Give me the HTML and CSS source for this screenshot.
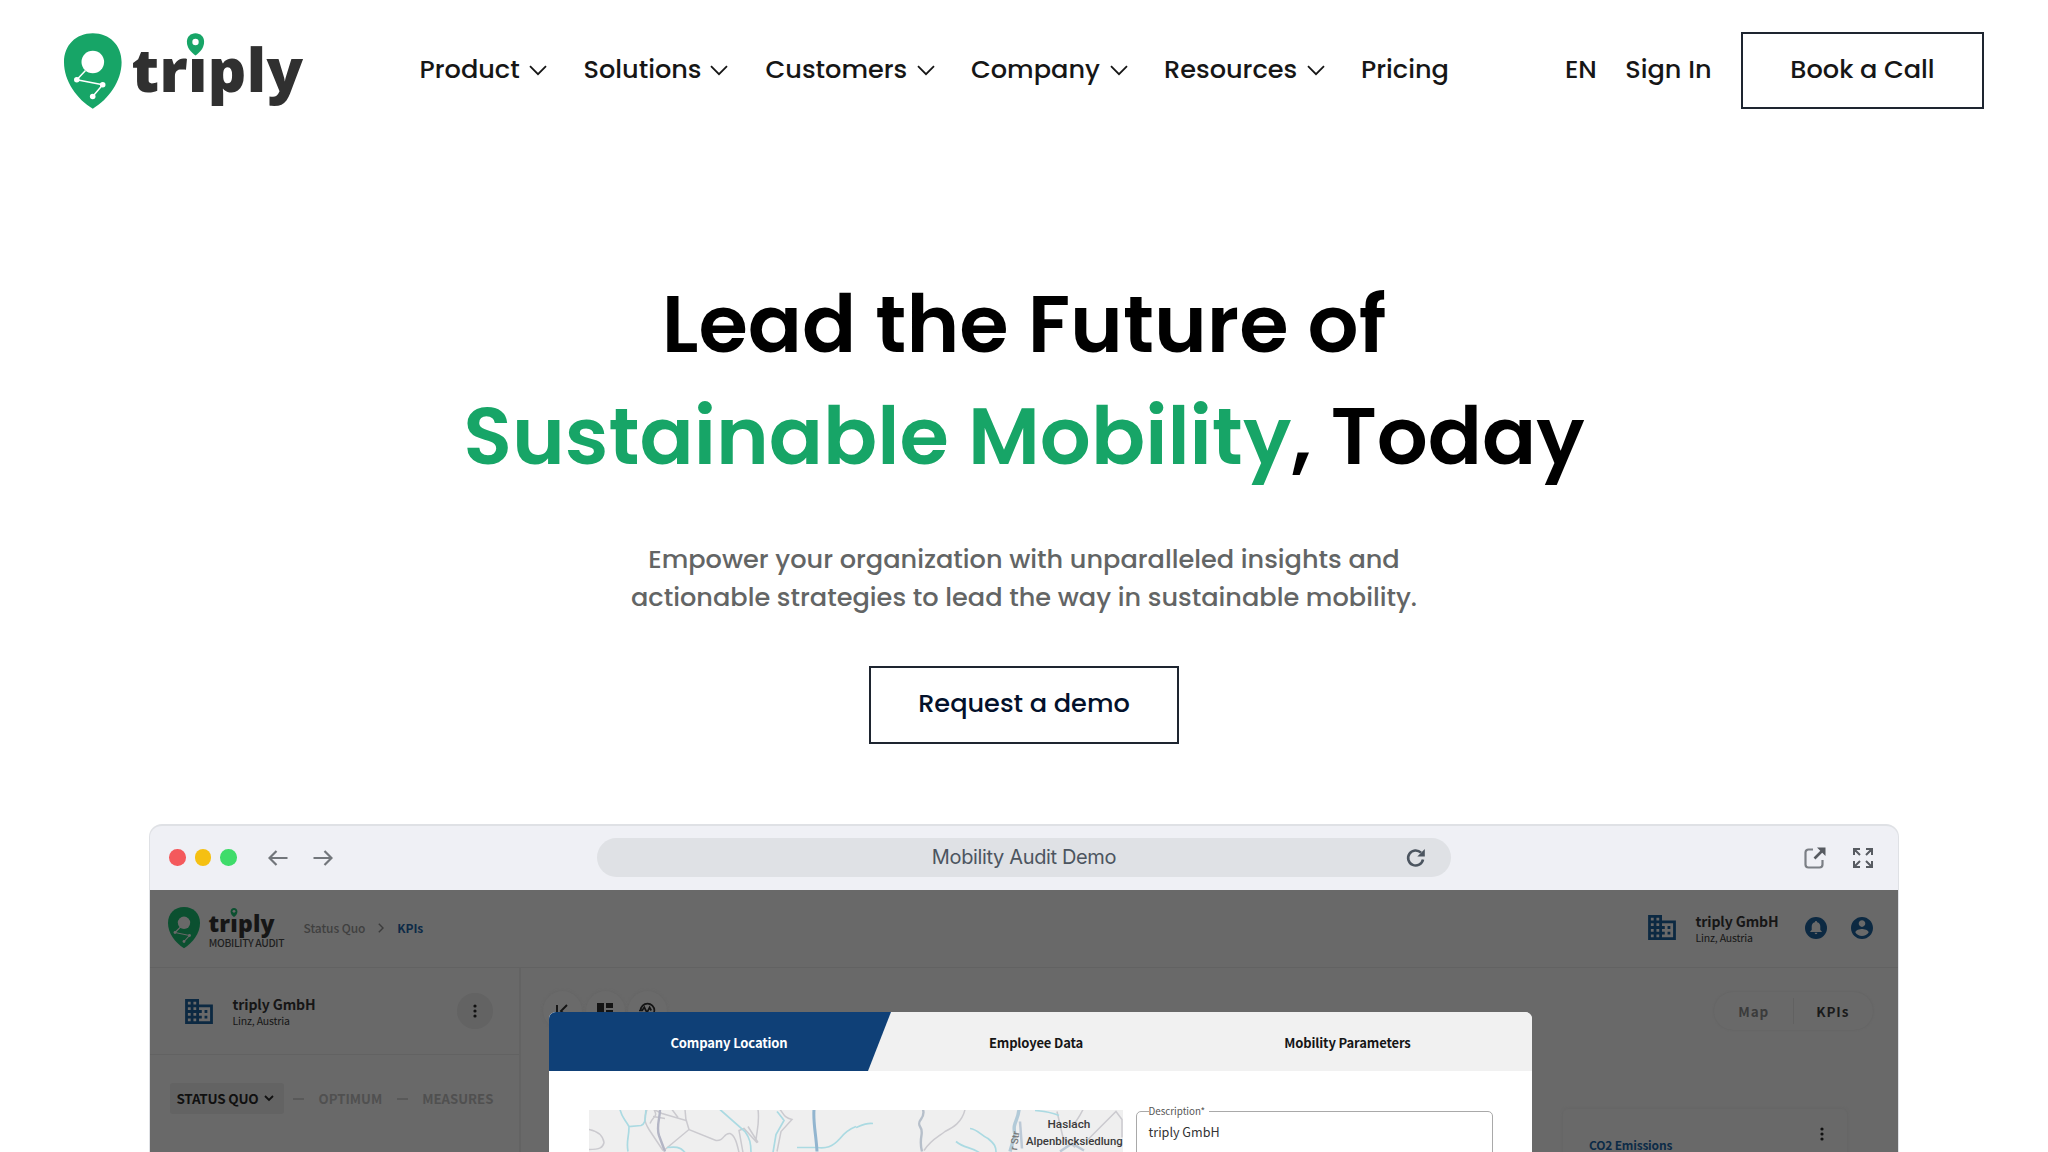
FILE: index.html
```html
<!DOCTYPE html>
<html lang="en">
<head>
<meta charset="utf-8">
<title>triply</title>
<link rel="stylesheet" href="styles.css">
</head>
<body>
<svg class="defs" width="0" height="0" aria-hidden="true">
  <symbol id="chev" viewBox="0 0 18 11"><path d="M1 1.2l8 8 8-8" fill="none" stroke="currentColor" stroke-width="1.8"/></symbol>
  <symbol id="building" viewBox="2 3 20 18"><path fill="currentColor" d="M12 7V3H2v18h20V7H12zM6 19H4v-2h2v2zm0-4H4v-2h2v2zm0-4H4V9h2v2zm0-4H4V5h2v2zm4 12H8v-2h2v2zm0-4H8v-2h2v2zm0-4H8V9h2v2zm0-4H8V5h2v2zm10 12h-8v-2h2v-2h-2v-2h2v-2h-2V9h8v10zm-2-8h-2v2h2v-2zm0 4h-2v2h2v-2z"/></symbol>
  <symbol id="kebab" viewBox="0 0 4 14"><circle cx="2" cy="2" r="1.6"/><circle cx="2" cy="7" r="1.6"/><circle cx="2" cy="12" r="1.6"/></symbol>
</svg>

<header class="header">
  <svg class="logo" viewBox="60 27 248 86" width="248" height="86">
    <text class="logo-text" x="131.5" y="91.500">triply</text>
    <path fill="#fff" d="M186 38h19v20.500h-19z"/>
    <path fill="#17a567" d="M92.8 33.3c17 0 28.8 12 28.8 29 0 19-13 37-28.8 46.500-15.800-9.500-28.800-27.500-28.800-46.500 0-17 11.800-29 28.800-29z"/>
    <circle cx="92.800" cy="62" r="11.300" fill="#fff"/>
    <path d="M85.500 70.500l-8.700 9.200 25.900 5-10 11.800" fill="none" stroke="#fff" stroke-width="1.500"/>
    <g fill="#fff"><circle cx="76.800" cy="79.700" r="2.800"/><circle cx="102.700" cy="84.700" r="2.800"/><circle cx="92.700" cy="96.500" r="2.800"/></g>
    <path fill="#17a567" d="M195.500 33.300c5 0 8.600 3.500 8.600 8.500 0 6-4 10.500-8.600 13.700-4.600-3.200-8.600-7.700-8.600-13.700 0-5 3.600-8.500 8.600-8.500z"/>
    <circle cx="195.500" cy="42" r="3.200" fill="#fff"/>
  </svg>
  <nav class="nav">
    <a class="n1">Product<svg class="chev"><use href="#chev"/></svg></a>
    <a class="n2">Solutions<svg class="chev"><use href="#chev"/></svg></a>
    <a class="n3">Customers<svg class="chev"><use href="#chev"/></svg></a>
    <a class="n4">Company<svg class="chev"><use href="#chev"/></svg></a>
    <a class="n5">Resources<svg class="chev"><use href="#chev"/></svg></a>
    <a class="n6">Pricing</a>
  </nav>
  <div class="actions">
    <a class="lang">EN</a>
    <a class="sign">Sign In</a>
    <a class="btn book">Book a Call</a>
  </div>
</header>

<section class="hero">
  <h1>Lead the Future of<br><span class="green-text">Sustainable Mobility</span>, Today</h1>
  <p>Empower your organization with unparalleled insights and<br>actionable strategies to lead the way in sustainable mobility.</p>
  <a class="btn demo">Request a demo</a>
</section>

<section class="browser">
  <div class="bar">
    <div class="bar-left">
      <i class="dot red"></i><i class="dot yellow"></i><i class="dot green"></i>
      <svg class="arrow first" viewBox="0 0 20 16"><path d="M19.500 8H1.500M8.500 1L1.500 8l7 7"/></svg>
      <svg class="arrow" viewBox="0 0 20 16"><path d="M.5 8h18M11.500 1l7 7-7 7"/></svg>
    </div>
    <div class="url">
      <span>Mobility Audit Demo</span>
      <svg class="reload" viewBox="0 0 20 20"><path d="M17 11.500A7.500 7.500 0 1 1 15 4.700" fill="none" stroke="#4c5560" stroke-width="2.600"/><path d="M18.800 1v7.500h-7.500z" fill="#4c5560"/></svg>
    </div>
    <div class="bar-right">
      <svg viewBox="0 0 22 22" width="22" height="22"><path d="M9 2.500H4.500a3 3 0 0 0-3 3v12a3 3 0 0 0 3 3h11a3 3 0 0 0 3-3V13" fill="none" stroke="#7b7f85" stroke-width="2.200"/><path d="M10.500 11.500L19 3" stroke="#575b61" stroke-width="2.600"/><path d="M13 .5h8.500V9z" fill="#575b61"/></svg>
      <svg viewBox="0 0 22 22" width="22" height="22" fill="none" stroke="#575b61" stroke-width="2"><path d="M2 8V2h6M2 2l6 6M14 2h6v6M20 2l-6 6M2 14v6h6M2 20l6-6M20 14v6h-6M20 20l-6-6"/></svg>
    </div>
  </div>

  <div class="app">
    <div class="app-head">
      <svg class="app-logo" viewBox="168 905 118 46" width="118" height="46">
        <text class="app-logo-text" x="208.500" y="931.500">triply</text>
        <path fill="#696969" d="M230 909h9v9.500h-9z"/>
        <path fill="#0b5030" d="M184 907c9.500 0 16 6.600 16 16 0 10-7 19.700-16 25.200-9-5.500-16-15.200-16-25.200 0-9.400 6.500-16 16-16z"/>
        <circle cx="184" cy="922.800" r="6.200" fill="#696969"/>
        <path d="M180 927.500l-5 5 14.500 3-5.500 6" fill="none" stroke="#696969" stroke-width="1.100"/>
        <g fill="#696969"><circle cx="175" cy="932.500" r="1.400"/><circle cx="189.500" cy="935.500" r="1.400"/><circle cx="184" cy="941.500" r="1.400"/></g>
        <path fill="#0b5030" d="M234 908c2 0 3.400 1.400 3.400 3.400 0 2.300-1.500 4.300-3.400 5.600-1.900-1.300-3.400-3.300-3.400-5.600 0-2 1.400-3.400 3.400-3.400z"/>
        <circle cx="234" cy="911.300" r="1.400" fill="#696969"/>
        <text class="app-logo-sub" x="208.800" y="947">MOBILITY AUDIT</text>
      </svg>
      <div class="crumbs"><span>Status Quo</span><svg viewBox="0 0 6 10" width="6" height="10"><path d="M.8.8L5 5 .8 9.200" fill="none" stroke="#3c3c3c" stroke-width="1.400"/></svg><b>KPIs</b></div>
      <div class="account">
        <svg class="bld"><use href="#building"/></svg>
        <div class="company"><b>triply GmbH</b><span>Linz, Austria</span></div>
        <svg class="round" viewBox="0 0 22 22"><circle cx="11" cy="11" r="11" fill="#0c2942"/><path fill="#696969" d="M11 4a1.200 1.200 0 0 1 1.200 1.200c2 .5 3.100 2.200 3.100 4.300v3.400l1.400 1.400v.7H5.300v-.7l1.400-1.400V9.500c0-2.100 1.100-3.800 3.100-4.300A1.200 1.200 0 0 1 11 4zM9.600 15.800h2.800a1.400 1.400 0 0 1-2.800 0z"/></svg>
        <svg class="round" viewBox="2 2 20 20"><path fill="#0c2942" d="M12 2C6.480 2 2 6.480 2 12s4.480 10 10 10 10-4.480 10-10S17.520 2 12 2zm0 3c1.660 0 3 1.340 3 3s-1.340 3-3 3-3-1.340-3-3 1.340-3 3-3zm0 14.200c-2.500 0-4.710-1.280-6-3.220.03-1.990 4-3.080 6-3.080 1.990 0 5.970 1.090 6 3.080-1.290 1.940-3.500 3.220-6 3.220z"/></svg>
      </div>
    </div>

    <div class="app-body">
      <aside class="side">
        <div class="side-company">
          <svg class="bld"><use href="#building"/></svg>
          <div class="company"><b>triply GmbH</b><span>Linz, Austria</span></div>
          <span class="more"><svg class="kebab"><use href="#kebab"/></svg></span>
        </div>
        <div class="steps">
          <b class="current">STATUS QUO<svg viewBox="0 0 10 7" width="10" height="7"><path d="M1 1l4 4 4-4" fill="none" stroke="#111" stroke-width="1.800"/></svg></b>
          <i></i><b class="s-opt">OPTIMUM</b><i class="dash2"></i><b>MEASURES</b>
        </div>
      </aside>
      <main class="content">
        <div class="tools">
          <span><svg viewBox="0 0 20 20" width="20" height="20"><path d="M4 4v12M14 4l-6 6 6 6" fill="none" stroke="#141414" stroke-width="1.900"/></svg></span>
          <span><svg viewBox="0 0 16 16" width="16" height="16"><path d="M0 0h7v9H0zM9 0h7v5H9zM9 7h7v9H9zM0 11h7v5H0z" fill="#141414"/></svg></span>
          <span><svg viewBox="0 0 16 16" width="17" height="17" fill="none" stroke="#141414" stroke-width="1.600"><path d="M1.500 8a6.500 6.500 0 1 1 6.500 6.500M0 8h3l2-3 2.500 5L10 5l1.500 3"/></svg></span>
          <div class="toggle"><b>Map</b><b class="on">KPIs</b></div>
        </div>
        <div class="card"><b>CO2 Emissions</b><svg class="kebab"><use href="#kebab"/></svg></div>
      </main>
    </div>

    <div class="modal">
      <div class="tabs">
        <svg class="tab-shape" viewBox="0 0 342 59" width="342" height="59"><path d="M0 0h342l-23 59H0z" fill="#0f4077"/></svg>
        <b class="tab on">Company Location</b>
        <b class="tab second">Employee Data</b>
        <b class="tab third">Mobility Parameters</b>
      </div>
      <div class="form">
        <svg class="map" viewBox="589 1110.500 534 42" width="534" height="42" fill="none">
          <path fill="#efefef" d="M589 1110h534v162H589z"/>
          <g stroke="#cbcacf" stroke-width="1.500">
            <path d="M589 1130c10 2 14 6 15 13-1 5-4 7-15 7"/>
            <path d="M647 1110c-3 8-3 12 2 20l14 21M650 1124c4-9 8-6 4-14l8 4 24 7-1-11M653 1117l12 2M672 1110l6 8"/>
            <path d="M665 1150l24-20 27 11c9 1 7-8 14-7 5 2 7 10 9 19M758 1110c2 14-2 24-2 32l-12-13-5 2 4 22M758 1143l-10-16M780 1110c4 5 4 8 12 10l-11 12-4 20"/>
            <path d="M686 1120l3 10"/>
            <path d="M965 1110c-3 13-12 18-20 22-8 6-15 9-21 19M1083 1110c-5 10-8 14-12 17M1088 1140l28-28 6 8v18M1057 1112l6 26 12 10"/>
          </g>
          <path d="M660 1110c0 9-4 17-1 26l6 16" stroke="#b3b5c5" stroke-width="2.400"/>
          <g stroke="#abdae2" stroke-width="1.700">
            <path d="M620 1110c2 8 3 7 9 17l12-1c5-2 4-7 5-16M629 1127c0 12-3 14-1 25M667 1148c8-1 13-1 18 5M720 1110l25 22c5 7 6 12 6 22M777 1112c4 5 5 6 7 9l-8 14-3 18M856 1127c-8 3-12 7-16 12-8 9-14 10-23 9h-20M856 1128c5-2 10-5 17-4M970 1129c8 1 11 7 18 10 7 6 8 8 8 14M956 1142c8 7 15 5 23 11M1035 1111c12 1 17 2 24 5"/>
          </g>
          <path d="M814 1110c-1 14 2 24 3 42" stroke="#92b5cf" stroke-width="3"/>
          <path d="M923 1110c3 10-7 10-3 17 5 7-2 10 2 25" stroke="#b6bfca" stroke-width="2.400"/>
          <path d="M1019 1110c-1 12-7 13-4 25l-5 17" stroke="#b2cad8" stroke-width="3.500"/>
          <path d="M1020 1122l2 27M1060 1152l12-8 12 7" stroke="#bcc9d6" stroke-width="2.500"/>
          <text class="map-label" x="1047.500" y="1128.500">Haslach</text>
          <text class="map-label long" x="1026" y="1145">Alpenblicksiedlung</text>
          <text class="map-road" transform="translate(1017 1151) rotate(-83)">r Str</text>
        </svg>
        <fieldset class="field"><legend>Description*</legend>triply GmbH</fieldset>
      </div>
    </div>
  </div>
</section>
</body>
</html>
```
FILE: styles.css
```css
* { box-sizing: border-box; }
html, body { margin: 0; height: 1152px; overflow: hidden; background: #fff; }
body { display: flex; flex-direction: column; font-family: Poppins, Inter, "Liberation Sans", sans-serif; }
svg { display: block; flex: none; }
.defs { position: absolute; }

/* header */
.header { display: flex; align-items: center; height: 140px; flex: none; padding: 0 64px 0 60px; color: #161616; font-size: 25.600px; font-weight: 500; line-height: 30px; white-space: nowrap; }
.logo-text { font: 800 60px "Open Sans", sans-serif; letter-spacing: .36px; fill: #303030; }
.nav { display: flex; margin-left: 111.500px; padding-bottom: 2px; }
.nav a { display: flex; justify-content: space-between; }
.chev { width: 18px; height: 11px; margin-top: 11px; }
.n1 { width: 127.500px; margin-right: 36.500px; }
.n2 { width: 144px; margin-right: 38px; }
.n3 { width: 169px; margin-right: 36.500px; }
.n4 { width: 157px; margin-right: 36px; }
.n5 { width: 160.500px; margin-right: 36.500px; }
.actions { display: flex; align-items: center; margin-left: auto; }
.lang { margin-right: 28.500px; padding-bottom: 2px; }
.sign { margin-right: 29.500px; padding-bottom: 2px; }
.btn { display: flex; align-items: center; justify-content: center; border: 2px solid #1e2530; }
.book { width: 243px; height: 77px; padding-bottom: 3px; }

/* hero */
.hero { display: flex; flex-direction: column; align-items: center; flex: none; height: 684px; padding-top: 128px; text-align: center; white-space: nowrap; }
h1 { margin: 0; font-size: 80px; line-height: 112px; font-weight: 600; color: #000; }
.green-text { color: #17a567; }
.hero p { margin: 48px 0 0; font-size: 25.600px; font-weight: 500; line-height: 38.400px; color: #636565; }
.demo { width: 310px; height: 78px; margin-top: 49px; padding-bottom: 2px; font-size: 25.600px; font-weight: 500; color: #03112b; }

/* browser mockup */
.browser { flex: none; align-self: center; width: 1750px; height: 328px; border: 1px solid #dfe1e5; border-width: 2px 1px 0; border-radius: 13px 13px 0 0; background: #eff0f5; overflow: hidden; }
.bar { display: flex; align-items: center; justify-content: space-between; height: 64px; padding-bottom: 1px; }
.bar-left, .bar-right { display: flex; align-items: center; width: 300px; }
.bar-left { padding-left: 19px; }
.bar-right { justify-content: flex-end; padding-right: 24.500px; gap: 26px; }
.dot { width: 16.500px; height: 16.500px; margin-right: 9.200px; border-radius: 50%; }
.red { background: #f4595c; }
.yellow { background: #f5c012; }
.green { background: #3fdc6a; }
.arrow { width: 20px; height: 16px; fill: none; stroke: #72767b; stroke-width: 2.200; margin-right: 25px; }
.arrow.first { margin-left: 21.500px; }
.url { display: flex; align-items: center; justify-content: flex-end; width: 854px; height: 39px; padding-right: 25px; border-radius: 20px; background: #dfe1e5; }
.url span { flex: 1; padding-left: 45px; text-align: center; font: 400 20px/37px Inter, sans-serif; letter-spacing: -.36px; color: #4c5560; }
.reload { width: 20px; height: 20px; }

/* app */
.app { position: relative; height: 262px; background: #696969; color: #161616; font-family: "Noto Sans CJK SC", "Noto Sans", sans-serif; overflow: hidden; }
.app-head { display: flex; align-items: center; height: 78px; padding: 0 25.500px 2px 17.500px; border-bottom: 1px solid #626262; }
.app-logo-text { font: 800 23px "Open Sans", sans-serif; letter-spacing: .2px; fill: #161616; }
.app-logo-sub { font-size: 10.300px; font-weight: 500; letter-spacing: -.32px; fill: #1f1f1f; }
.crumbs { display: flex; align-items: center; margin-left: 18px; font-size: 12px; line-height: 16px; color: #404040; font-weight: 500; letter-spacing: -.08px; }
.crumbs svg { margin: 0 13px 0 13px; }
.crumbs b { color: #0d2a47; }
.account { display: flex; align-items: center; margin-left: auto; }
.bld { width: 28px; height: 25px; color: #0c2942; }
.company { display: flex; flex-direction: column; width: 97px; margin-left: 19.500px; padding-top: 1px; }
.company b { font-size: 14px; line-height: 18px; letter-spacing: -.1px; }
.company span { font-size: 10.500px; line-height: 14px; letter-spacing: -.18px; padding-top: 1px; }
.round { width: 22px; height: 22px; margin-left: 12px; }
.round + .round { margin-left: 24px; }
.app-body { display: flex; height: 184px; }
.side { width: 371px; border-right: 2px solid #636363; }
.side-company { display: flex; align-items: center; height: 87px; padding: 0 26px 0 35px; border-bottom: 1px solid #626262; }
.more { display: flex; align-items: center; justify-content: center; width: 36px; height: 36px; margin-left: auto; border-radius: 50%; background: #636363; }
.kebab { width: 4px; height: 14px; fill: #111; }
.steps { display: flex; align-items: center; height: 31px; margin: 28px 0 0 19.500px; font-size: 13.200px; color: #505050; }
.steps i { width: 11px; height: 2px; margin: 0 15px 0 9px; background: #595959; }
.steps .dash2 { margin: 0 14px 0 15px; }
.current { display: flex; align-items: center; justify-content: space-between; width: 114px; height: 31px; padding: 0 10px 1px 7px; font-size: 13.500px; letter-spacing: -.24px; color: #101010; background: #636363; border-radius: 3px; }
.content { flex: 1; }
.tools { display: flex; align-items: center; gap: 3.500px; height: 41px; margin: 22px 25px 0 22px; }
.tools span { display: flex; align-items: center; justify-content: center; width: 39px; height: 39px; border-radius: 50%; background: #6a6a6a; box-shadow: 0 0 3px #646464; }
.toggle { display: flex; align-items: center; width: 159px; height: 38px; margin-left: auto; border-radius: 19px; box-shadow: 0 0 2px #606060; font-size: 13.500px; }
.toggle b { width: 80px; text-align: center; letter-spacing: .9px; color: #3b3b3b; }
.toggle .on { color: #1a1a1a; border-left: 1px solid #616161; line-height: 26px; padding-right: 2px; }
.card { display: flex; justify-content: space-between; align-items: flex-start; width: 284px; height: 90px; margin: 78px 51px 0 auto; padding: 18px 23px 0 26px; border-radius: 5px; box-shadow: 0 0 3px #626262; color: #0c2b47; }
.card b { font-size: 12px; line-height: 18px; letter-spacing: -.2px; padding-top: 9px; }

/* setup dialog over the app */
.modal { position: absolute; left: 399px; top: 122px; width: 983px; height: 140px; border-radius: 7px 7px 0 0; background: #fff; overflow: hidden; }
.tabs { display: flex; align-items: center; height: 59px; position: relative; background: #f1f1f1; font-size: 13px; letter-spacing: -.14px; text-align: center; }
.tab-shape { position: absolute; left: 0; top: 0; }
.tab { position: relative; width: 360px; padding-top: 1px; }
.tab.on { color: #fff; }
.tab.second { width: 254px; }
.tab.third { width: 369px; }
.form { display: flex; gap: 13px; padding: 39px 0 0 39.500px; }
.map-label { font: 500 11.800px Roboto, sans-serif; fill: #3b3b3b; }
.map-label.long { font-size: 11.400px; }
.map-road { font: 500 10px Roboto, sans-serif; fill: #777; }
.field { width: 357px; height: 70px; min-width: 0; margin: -5px 0 0; padding: 5px 12px 0; border: 1px solid #a9a9a9; border-radius: 5px; font-size: 12.600px; line-height: 20px; color: #333; }
.field legend { padding: 0 4px 0 0; margin-left: 0; font-size: 9.800px; line-height: 12px; color: #555; }
```
